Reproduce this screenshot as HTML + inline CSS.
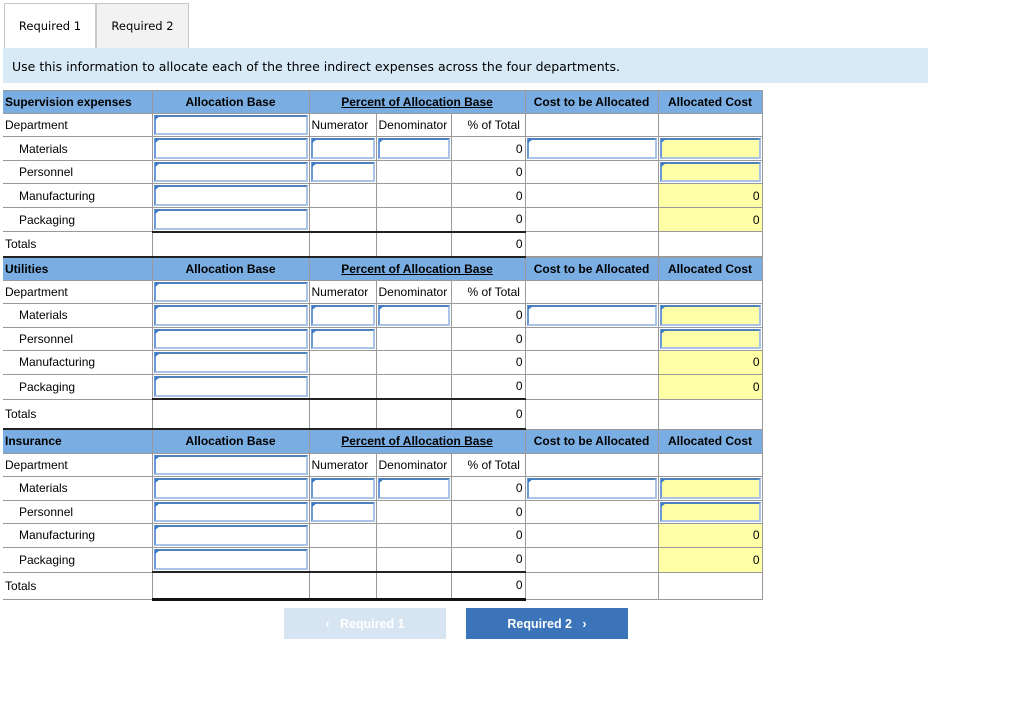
<!DOCTYPE html>
<html><head><meta charset="utf-8"><style>
body{margin:0;width:1024px;height:710px;background:#fff;font-family:"Liberation Sans",Arial,sans-serif;position:relative;overflow:hidden}
.tab{position:absolute;top:3px;height:44px;border:1px solid #c8c8c8;border-bottom:none;line-height:44px;text-align:center;font-family:"DejaVu Sans",sans-serif;font-size:11.5px}
.info{position:absolute;left:3px;top:48px;width:925px;height:35px;background:#d9eaf7;font-family:"DejaVu Sans",sans-serif;font-size:12.5px;line-height:38px;padding-left:9px;box-sizing:border-box}
table{position:absolute;left:3px;width:759px;border-collapse:collapse;table-layout:fixed;font-size:12px}
td{border:1px solid #9a9a9a;padding:0 2px;white-space:nowrap;overflow:hidden;position:relative;box-sizing:border-box}
td:first-child{border-left:none}
tr.h td{background:#7aaee3;font-weight:bold;text-align:center}
tr.h td:first-child{text-align:left;padding-left:2px}
.u{text-decoration:underline}
.ind{padding-left:16px}
.r{text-align:right}
.in{padding:1px}
.in div{position:absolute;left:1px;right:1px;top:1px;bottom:1px;border:2px solid #a9c4e6;border-top-color:#4f81bd;border-left-color:#6d9ad6}
.in div:before{content:"";position:absolute;left:-1px;top:-1px;border-left:5px solid #3a78c8;border-bottom:4px solid transparent;border-top:0}
.y{background:#ffffa8}
.yi div{background:#ffffa8}
.bt{border-top:2px solid #222}
.btn{position:absolute;top:608px;width:162px;height:31px;font-weight:bold;font-size:12.5px;color:#fff;text-align:center;line-height:32px}
</style></head><body>
<div class="tab" style="left:4px;width:90px;background:#fff">Required 1</div>
<div class="tab" style="left:96px;width:91px;background:#f2f2f2">Required 2</div>
<div class="info">Use this information to allocate each of the three indirect expenses across the four departments.</div>

<table style="top:90px">
<colgroup><col style="width:149px"><col style="width:157px"><col style="width:67px"><col style="width:75px"><col style="width:74px"><col style="width:133px"><col style="width:104px"></colgroup>
<tr class="h" style="height:23px"><td>Supervision expenses</td><td>Allocation Base</td><td colspan="3"><span class="u">Percent of Allocation Base</span></td><td>Cost to be Allocated</td><td>Allocated Cost</td></tr>
<tr style="height:23px"><td>Department</td><td class="in"><div></div></td><td>Numerator</td><td>Denominator</td><td class="ind">% of Total</td><td></td><td></td></tr>
<tr style="height:24px"><td class="ind">Materials</td><td class="in"><div></div></td><td class="in"><div></div></td><td class="in"><div></div></td><td class="r">0</td><td class="in"><div></div></td><td class="in yi"><div></div></td></tr>
<tr style="height:23px"><td class="ind">Personnel</td><td class="in"><div></div></td><td class="in"><div></div></td><td></td><td class="r">0</td><td></td><td class="in yi"><div></div></td></tr>
<tr style="height:24px"><td class="ind">Manufacturing</td><td class="in"><div></div></td><td></td><td></td><td class="r">0</td><td></td><td class="r y">0</td></tr>
<tr style="height:24px"><td class="ind">Packaging</td><td class="in"><div></div></td><td></td><td></td><td class="r">0</td><td></td><td class="r y">0</td></tr>
<tr style="height:25px"><td>Totals</td><td class="bt"></td><td class="bt"></td><td class="bt"></td><td class="r bt">0</td><td></td><td></td></tr>
</table>

<table style="top:256px">
<colgroup><col style="width:149px"><col style="width:157px"><col style="width:67px"><col style="width:75px"><col style="width:74px"><col style="width:133px"><col style="width:104px"></colgroup>
<tr class="h" style="height:23px"><td class="bt">Utilities</td><td class="bt">Allocation Base</td><td colspan="3" class="bt"><span class="u">Percent of Allocation Base</span></td><td>Cost to be Allocated</td><td>Allocated Cost</td></tr>
<tr style="height:23px"><td>Department</td><td class="in"><div></div></td><td>Numerator</td><td>Denominator</td><td class="ind">% of Total</td><td></td><td></td></tr>
<tr style="height:24px"><td class="ind">Materials</td><td class="in"><div></div></td><td class="in"><div></div></td><td class="in"><div></div></td><td class="r">0</td><td class="in"><div></div></td><td class="in yi"><div></div></td></tr>
<tr style="height:23px"><td class="ind">Personnel</td><td class="in"><div></div></td><td class="in"><div></div></td><td></td><td class="r">0</td><td></td><td class="in yi"><div></div></td></tr>
<tr style="height:24px"><td class="ind">Manufacturing</td><td class="in"><div></div></td><td></td><td></td><td class="r">0</td><td></td><td class="r y">0</td></tr>
<tr style="height:25px"><td class="ind">Packaging</td><td class="in"><div></div></td><td></td><td></td><td class="r">0</td><td></td><td class="r y">0</td></tr>
<tr style="height:30px"><td>Totals</td><td class="bt"></td><td class="bt"></td><td class="bt"></td><td class="r bt">0</td><td></td><td></td></tr>
</table>

<table style="top:428px">
<colgroup><col style="width:149px"><col style="width:157px"><col style="width:67px"><col style="width:75px"><col style="width:74px"><col style="width:133px"><col style="width:104px"></colgroup>
<tr class="h" style="height:24px"><td class="bt">Insurance</td><td class="bt">Allocation Base</td><td colspan="3" class="bt"><span class="u">Percent of Allocation Base</span></td><td>Cost to be Allocated</td><td>Allocated Cost</td></tr>
<tr style="height:23px"><td>Department</td><td class="in"><div></div></td><td>Numerator</td><td>Denominator</td><td class="ind">% of Total</td><td></td><td></td></tr>
<tr style="height:24px"><td class="ind">Materials</td><td class="in"><div></div></td><td class="in"><div></div></td><td class="in"><div></div></td><td class="r">0</td><td class="in"><div></div></td><td class="in yi"><div></div></td></tr>
<tr style="height:23px"><td class="ind">Personnel</td><td class="in"><div></div></td><td class="in"><div></div></td><td></td><td class="r">0</td><td></td><td class="in yi"><div></div></td></tr>
<tr style="height:24px"><td class="ind">Manufacturing</td><td class="in"><div></div></td><td></td><td></td><td class="r">0</td><td></td><td class="r y">0</td></tr>
<tr style="height:25px"><td class="ind">Packaging</td><td class="in"><div></div></td><td></td><td></td><td class="r">0</td><td></td><td class="r y">0</td></tr>
<tr style="height:27px"><td>Totals</td><td class="bt" style="border-bottom:3px solid #111"></td><td class="bt" style="border-bottom:3px solid #111"></td><td class="bt" style="border-bottom:3px solid #111"></td><td class="r bt" style="border-bottom:3px solid #111">0</td><td></td><td></td></tr>
</table>

<div class="btn" style="left:284px;background:#d7e4f2">&lsaquo;&nbsp;&nbsp;&nbsp;Required 1</div>
<div class="btn" style="left:466px;background:#3b74b9">Required 2&nbsp;&nbsp;&nbsp;&rsaquo;</div>
</body></html>
